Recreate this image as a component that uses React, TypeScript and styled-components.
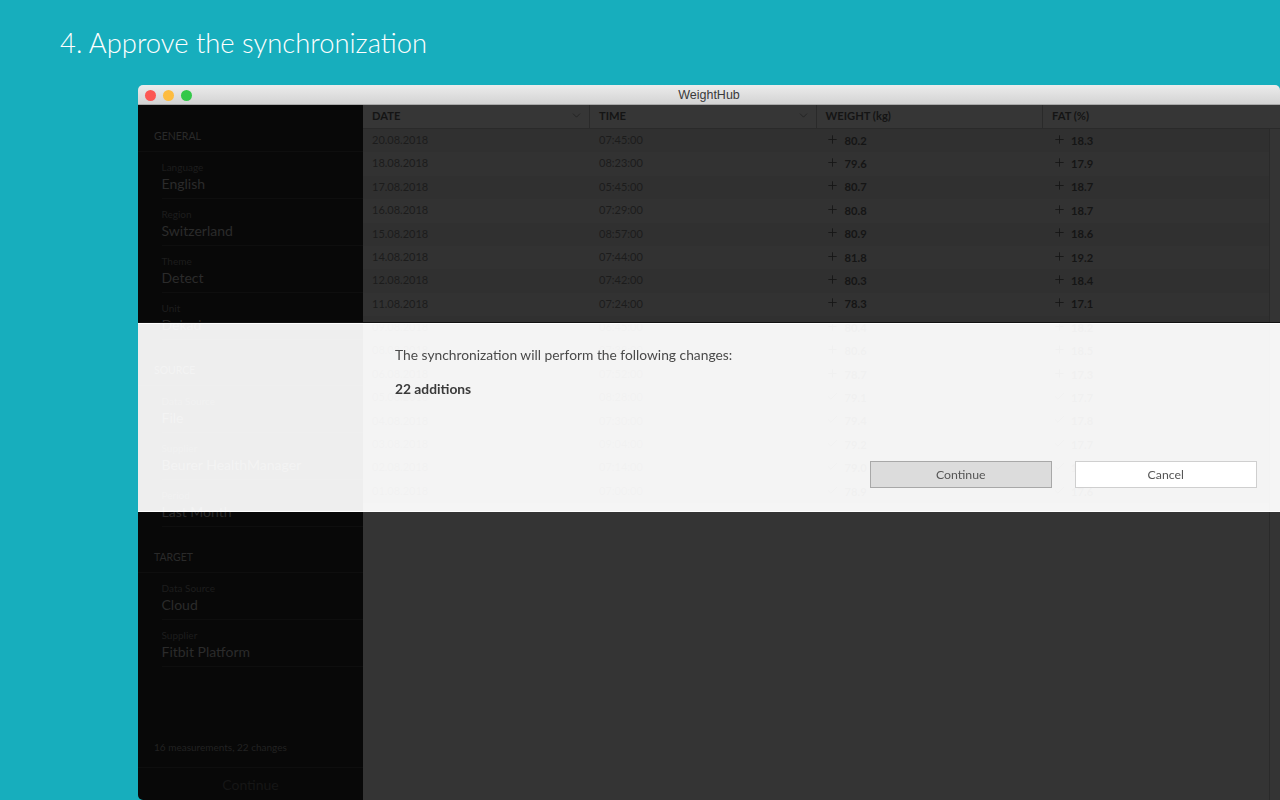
import React from "react";
import styled, { createGlobalStyle } from "styled-components";
import { Check, ChevronDown, Plus } from "lucide-react";

type TRow = { date: string; time: string; weight: string; fat: string; done?: boolean };

const rows: TRow[] = [
	{ date: "20.08.2018", time: "07:45:00", weight: "80.2", fat: "18.3" },
	{ date: "18.08.2018", time: "08:23:00", weight: "79.6", fat: "17.9" },
	{ date: "17.08.2018", time: "05:45:00", weight: "80.7", fat: "18.7" },
	{ date: "16.08.2018", time: "07:29:00", weight: "80.8", fat: "18.7" },
	{ date: "15.08.2018", time: "08:57:00", weight: "80.9", fat: "18.6" },
	{ date: "14.08.2018", time: "07:44:00", weight: "81.8", fat: "19.2" },
	{ date: "12.08.2018", time: "07:42:00", weight: "80.3", fat: "18.4" },
	{ date: "11.08.2018", time: "07:24:00", weight: "78.3", fat: "17.1" },
	{ date: "09.08.2018", time: "06:45:00", weight: "80.4", fat: "18.2" },
	{ date: "08.08.2018", time: "07:38:00", weight: "80.6", fat: "18.5" },
	{ date: "06.08.2018", time: "07:52:00", weight: "78.7", fat: "17.3" },
	{ date: "05.08.2018", time: "08:28:00", weight: "79.1", fat: "17.7", done: true },
	{ date: "04.08.2018", time: "07:30:00", weight: "79.4", fat: "17.8", done: true },
	{ date: "03.08.2018", time: "09:04:00", weight: "79.2", fat: "17.7", done: true },
	{ date: "02.08.2018", time: "07:14:00", weight: "79.0", fat: "17.6", done: true },
	{ date: "01.08.2018", time: "07:00:00", weight: "78.9", fat: "17.6", done: true },
];

const sections = [
	{
		title: "General",
		items: [
			["Language", "English"],
			["Region", "Switzerland"],
			["Theme", "Detect"],
			["Unit", "Dekad"],
		],
	},
	{
		title: "Source",
		items: [
			["Data Source", "File"],
			["Supplier", "Beurer HealthManager"],
			["Period", "Last Month"],
		],
	},
	{
		title: "Target",
		items: [
			["Data Source", "Cloud"],
			["Supplier", "Fitbit Platform"],
		],
	},
];

const GlobalStyle = createGlobalStyle`
	html, body {
		margin: 0;
		height: 100%;
		overflow: hidden;
		background: #17aebd;
	}
`;

const Page = styled.div`
	width: 1280px;
	height: 800px;
	overflow: hidden;
	display: flex;
	flex-direction: column;
	font-family: Lato, "Open Sans", sans-serif;
`;

const Heading = styled.h1`
	margin: 0;
	height: 85px;
	padding: 23px 0 0 60px;
	box-sizing: border-box;
	color: #ffffff;
	font-size: 27.4px;
	line-height: 40px;
	font-weight: 300;
`;

const Window = styled.div`
	position: relative;
	margin-left: 138px;
	height: 715px;
	border-radius: 5px 5px 0 5px;
	overflow: hidden;
	display: flex;
	flex-direction: column;
`;

const TitleBar = styled.div`
	height: 20px;
	flex: none;
	box-sizing: border-box;
	padding-top: 1px;
	position: relative;
	display: flex;
	align-items: center;
	justify-content: center;
	background: linear-gradient(#ececec, #d3d3d3);
	border-bottom: 1px solid #a9a9a9;
	font-family: "Liberation Sans", sans-serif;
	font-size: 12.5px;
	color: #3a3a3a;
`;

const Lights = styled.div`
	position: absolute;
	left: 7px;
	top: 4.5px;
	display: flex;
	gap: 7px;
`;

const Light = styled.span<{ $color: string }>`
	width: 11px;
	height: 11px;
	border-radius: 50%;
	background: ${({ $color }) => $color};
`;

const Body = styled.div`
	height: 695px;
	flex: none;
	display: flex;
`;

const Sidebar = styled.aside`
	width: 225px;
	flex: none;
	box-sizing: border-box;
	padding-top: 1px;
	display: flex;
	flex-direction: column;
	background: #080808;
`;

const SectionTitle = styled.div`
	height: 46px;
	box-sizing: border-box;
	padding: 22px 0 0 16px;
	font-size: 10.5px;
	line-height: 16px;
	text-transform: uppercase;
	color: #2a2a2a;
	border-bottom: 1px solid #0e0e0e;
`;

const Item = styled.div`
	height: 47px;
	box-sizing: border-box;
	margin-left: 23.5px;
	padding-top: 7.5px;
	border-bottom: 1px solid #0e0e0e;
`;

const ItemLabel = styled.div`
	font-size: 10px;
	line-height: 14px;
	color: #1d1d1d;
`;

const ItemValue = styled.div`
	font-size: 14px;
	line-height: 19px;
	color: #2b2b2b;
`;

const Summary = styled.div`
	margin-top: auto;
	height: 28px;
	box-sizing: border-box;
	padding-left: 16px;
	font-size: 10px;
	line-height: 16px;
	color: #222222;
`;

const FooterAction = styled.div`
	height: 32px;
	flex: none;
	display: flex;
	align-items: center;
	justify-content: center;
	font-size: 14px;
	color: #161616;
	border-top: 1px solid #0e0e0e;
`;

const Table = styled.main`
	flex: 1;
	min-width: 0;
	display: flex;
	flex-direction: column;
	background: #343434;
`;

const HeadRow = styled.div`
	height: 23px;
	flex: none;
	display: grid;
	grid-template-columns: 227px 226.5px 226.5px 1fr;
	background: #363636;
	border-bottom: 1px solid #2a2a2a;
`;

const HeadCell = styled.div`
	display: flex;
	align-items: center;
	justify-content: space-between;
	padding: 0 6px 2px 9px;
	font-size: 11.2px;
	font-weight: 700;
	color: #141414;
	border-right: 1px solid #2a2a2a;

	&:last-child {
		border-right: 0;
	}
`;

const TableBody = styled.div`
	flex: 1;
	display: flex;
	min-height: 0;
`;

const RowList = styled.div`
	flex: 1;
	min-width: 0;
`;

const Gutter = styled.div`
	width: 11px;
	flex: none;
	box-sizing: border-box;
	border-left: 1px solid #2a2a2a;
`;

const Row = styled.div<{ $even: boolean }>`
	height: 23.4px;
	display: grid;
	grid-template-columns: 227px 226.5px 226.5px 1fr;
	align-items: center;
	background: ${({ $even }) => ($even ? "#323232" : "#303030")};
`;

const Cell = styled.div`
	padding: 0 0 2.5px 9px;
	font-size: 11px;
	color: #1c1c1c;
`;

const ValueCell = styled.div`
	display: flex;
	align-items: center;
	gap: 5.5px;
	padding: 0 0 1px 9.5px;
	font-size: 11.2px;
	font-weight: 700;
	color: #151515;

	svg {
		position: relative;
		top: -1px;
	}
`;

const Modal = styled.div`
	position: absolute;
	left: 0;
	right: 0;
	top: 238px;
	height: 189px;
	box-sizing: border-box;
	padding: 22px 23.5px 23px 257px;
	display: flex;
	flex-direction: column;
	color: #4a4a4a;
	font-size: 13.8px;
	background: rgba(252, 252, 252, 0.94);
	backdrop-filter: brightness(2.5);
	border-top: 1px solid #ffffff;
	border-bottom: 1px solid #ffffff;
	box-shadow: 0 -1px 0 #111111;
`;

const ModalText = styled.div`
	line-height: 18px;
`;

const ModalStrong = styled(ModalText)`
	margin-top: 16px;
	font-weight: 700;
	color: #3a3a3a;
`;

const Buttons = styled.div`
	margin-top: auto;
	display: flex;
	justify-content: flex-end;
	gap: 23.5px;
`;

const Button = styled.button<{ $primary?: boolean }>`
	width: 181.5px;
	height: 27px;
	box-sizing: border-box;
	padding: 0;
	font-family: inherit;
	font-size: 12.3px;
	color: #555555;
	background: ${({ $primary }) => ($primary ? "#dcdcdc" : "#ffffff")};
	border: 1px solid ${({ $primary }) => ($primary ? "#a8a8a8" : "#cfcfcf")};
`;

export default function App() {
	return (
		<Page>
			<GlobalStyle />
			<Heading>4. Approve the synchronization</Heading>
			<Window>
				<TitleBar>
					<Lights>
						<Light $color="#fc5753" />
						<Light $color="#fdbc40" />
						<Light $color="#34c84a" />
					</Lights>
					WeightHub
				</TitleBar>
				<Body>
					<Sidebar>
						{sections.map((section) => (
							<div key={section.title}>
								<SectionTitle>{section.title}</SectionTitle>
								{section.items.map(([label, value]) => (
									<Item key={label}>
										<ItemLabel>{label}</ItemLabel>
										<ItemValue>{value}</ItemValue>
									</Item>
								))}
							</div>
						))}
						<Summary>16 measurements, 22 changes</Summary>
						<FooterAction>Continue</FooterAction>
					</Sidebar>
					<Table>
						<HeadRow>
							<HeadCell>
								DATE
								<ChevronDown size={13} strokeWidth={1} />
							</HeadCell>
							<HeadCell>
								TIME
								<ChevronDown size={13} strokeWidth={1} />
							</HeadCell>
							<HeadCell>WEIGHT (kg)</HeadCell>
							<HeadCell>FAT (%)</HeadCell>
						</HeadRow>
						<TableBody>
							<RowList>
								{rows.map((row, index) => {
									const Icon = row.done ? Check : Plus;
									return (
										<Row key={row.date} $even={index % 2 === 1}>
											<Cell>{row.date}</Cell>
											<Cell>{row.time}</Cell>
											<ValueCell>
												<Icon size={13} strokeWidth={1.6} />
												{row.weight}
											</ValueCell>
											<ValueCell>
												<Icon size={13} strokeWidth={1.6} />
												{row.fat}
											</ValueCell>
										</Row>
									);
								})}
							</RowList>
							<Gutter />
						</TableBody>
					</Table>
				</Body>
				<Modal>
					<ModalText>The synchronization will perform the following changes:</ModalText>
					<ModalStrong>22 additions</ModalStrong>
					<Buttons>
						<Button $primary>Continue</Button>
						<Button>Cancel</Button>
					</Buttons>
				</Modal>
			</Window>
		</Page>
	);
}
